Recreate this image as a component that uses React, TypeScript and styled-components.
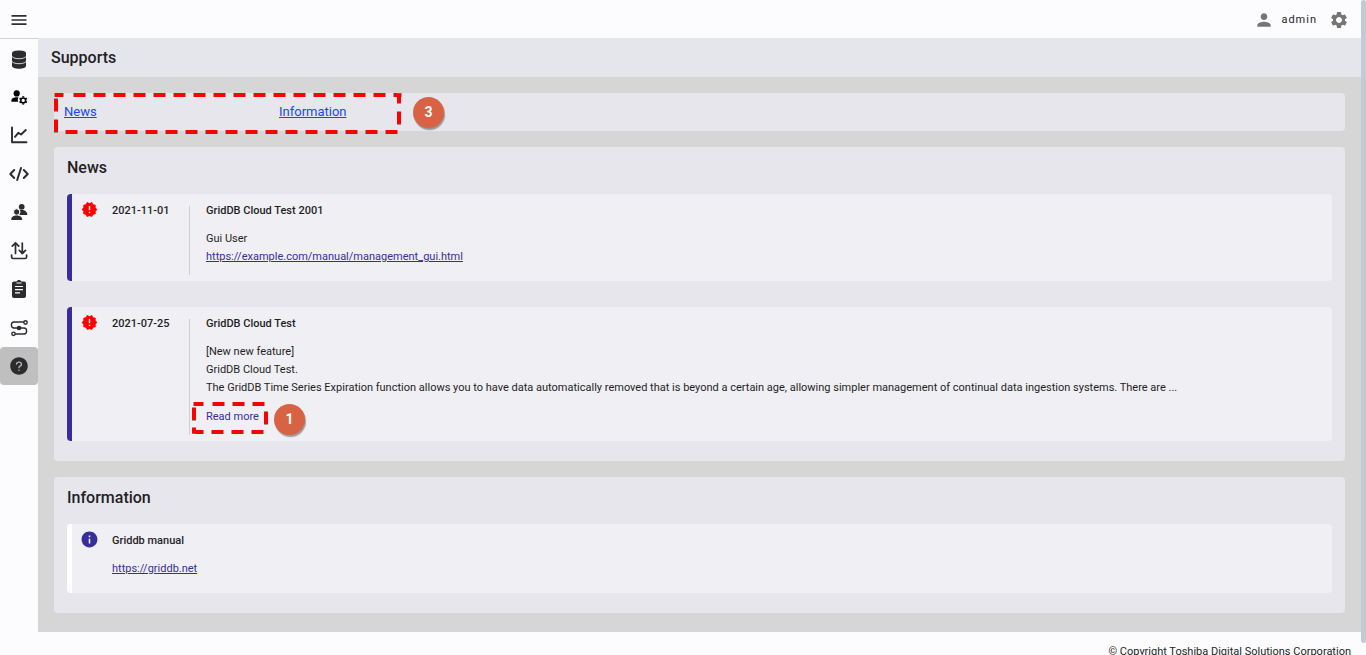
import React from "react";
import styled, { createGlobalStyle, css } from "styled-components";
import { MdInfo, MdMenu, MdNewReleases, MdPerson, MdSettings } from "react-icons/md";
import { AiFillQuestionCircle } from "react-icons/ai";

const GlobalStyle = createGlobalStyle`
  *, *::before, *::after { box-sizing: border-box; }
  body {
    margin: 0;
    background: #fcfcfe;
    color: #1f1f24;
    font-family: Roboto, "Liberation Sans", sans-serif;
    font-size: 11px;
    line-height: 18px;
  }
  h1, h2, h3, p { margin: 0; }
  button { border: 0; padding: 0; background: none; color: inherit; font: inherit; cursor: pointer; }
`;

const Window = styled.div`
  display: flex;
  height: 100vh;
`;

const Page = styled.div`
  flex: 1;
  min-width: 0;
  overflow-y: auto;
  scrollbar-width: none;
`;

const ScrollTrack = styled.div`
  flex: none;
  width: 5px;
  padding-bottom: 12px;
  background: #fcfcfe;
`;

const ScrollThumb = styled.div`
  height: 100%;
  border-radius: 3px;
  background: #c5c8d5;
`;

const TopBar = styled.header`
  display: flex;
  align-items: center;
  justify-content: space-between;
  height: 38px;
  padding: 2px 12px 0 0;
  background: #fcfcfe;
`;

const IconButton = styled.button`
  display: flex;
  align-items: center;
  justify-content: center;
  width: 38px;
  height: 36px;
  color: #303034;
`;

const Account = styled.div`
  display: flex;
  align-items: center;
  color: #757575;
`;

const UserName = styled.span`
  margin: 0 12px 0 7px;
  color: #1f1f24;
  font-size: 11px;
  letter-spacing: 1px;
`;

const SettingsButton = styled.button`
  display: flex;
  color: #757575;
`;

const Columns = styled.div`
  display: flex;
`;

const Sidebar = styled.nav`
  flex: none;
  width: 38px;
  border-top: 1px solid #d2d2d4;
`;

const SideList = styled.div`
  display: flex;
  flex-direction: column;
  justify-content: space-between;
  height: 346px;
`;

const SideButton = styled.button<{ $active?: boolean }>`
  display: flex;
  align-items: center;
  justify-content: center;
  width: 38px;
  height: 38px;
  border-radius: 4px;
  color: #2c2c2e;
  ${(p) => p.$active && css`background: #bfbfbf;`}
`;

const Content = styled.div`
  flex: 1;
  min-width: 0;
`;

const TitleBar = styled.div`
  display: flex;
  align-items: center;
  height: 39px;
  padding-left: 13px;
  background: #e5e6eb;
`;

const Title = styled.h1`
  font-size: 16px;
  font-weight: 500;
  line-height: 18px;
`;

const Main = styled.main`
  display: flex;
  flex-direction: column;
  gap: 16px;
  padding: 16px 16px 19px;
  background: #d6d6d6;
`;

const Card = styled.section`
  padding: 12px 13px 20px;
  border-radius: 4px;
  background: #e7e6ec;
`;

const JumpBar = styled.nav`
  position: relative;
  display: grid;
  grid-template-columns: 215px 1fr;
  align-items: center;
  height: 38px;
  padding: 0 10px;
  border-radius: 4px;
  background: #e7e6ec;
`;

const JumpLink = styled.a`
  justify-self: start;
  color: #1446ff;
  font-size: 13px;
`;

const CardTitle = styled.h2`
  margin-bottom: 17px;
  font-size: 16px;
  font-weight: 500;
  line-height: 18px;
`;

const Items = styled.div`
  display: flex;
  flex-direction: column;
  gap: 26px;
`;

const Item = styled.article<{ $accent: string }>`
  display: flex;
  padding-left: 9px;
  border-left: 5px solid ${(p) => p.$accent};
  border-radius: 4px;
  background: #f0eff4;
`;

const ItemIcon = styled.span<{ $color: string }>`
  display: flex;
  flex: none;
  align-items: center;
  justify-content: center;
  width: 17px;
  height: 17px;
  margin: 7px 14px 0 0;
  color: ${(p) => p.$color};
  svg { flex: none; }
`;

const ItemDate = styled.time`
  flex: none;
  width: 77px;
  padding-top: 9px;
  font-weight: 500;
  line-height: 16px;
`;

const Divider = styled.div`
  flex: none;
  width: 1px;
  margin: 12px 16px 6px 0;
  background: #cfcfd3;
`;

const ItemBody = styled.div`
  min-width: 0;
  padding: 9px 0 15px;
`;

const ItemTitle = styled.h3`
  margin-bottom: 11px;
  font-size: 11px;
  font-weight: 500;
  line-height: 16px;
`;

const TextLink = styled.a`
  color: #382d9c;
`;

const ReadMore = styled.div`
  position: relative;
  margin-top: 11px;
`;

const ReadMoreButton = styled.button`
  display: block;
  color: #382d9c;
`;

const Frame = styled.svg<{ $left: number; $top: number }>`
  position: absolute;
  left: ${(p) => p.$left}px;
  top: ${(p) => p.$top}px;
  pointer-events: none;
`;

const Marker = styled.span<{ $left: number; $top: number }>`
  position: absolute;
  left: ${(p) => p.$left}px;
  top: ${(p) => p.$top}px;
  width: 31px;
  height: 31px;
  border-radius: 50%;
  background: #d86344;
  box-shadow: 1px 2px 1px rgba(0, 0, 0, 0.35);
  color: #fff;
  font-size: 14px;
  font-weight: 700;
  line-height: 30px;
  text-align: center;
`;

const Footer = styled.footer`
  display: flex;
  justify-content: flex-end;
  height: 35px;
  padding: 11px 10px 0;
`;

type Dash = [x: number, y: number, w: number, h: number];

function DashedFrame({ left, top, width, height, dashes }: {
  left: number; top: number; width: number; height: number; dashes: Dash[];
}) {
  return (
    <Frame $left={left} $top={top} width={width} height={height} aria-hidden="true">
      {dashes.map(([x, y, w, h], i) => {
        const flat = w > h;
        return (
          <g key={i}>
            <rect x={flat ? x - 1 : x} y={flat ? y : y - 1} width={flat ? w + 2 : w} height={flat ? h : h + 2} fill="#8a7070" fillOpacity="0.7" />
            <rect x={x} y={y} width={w} height={h} fill="#ff0000" />
          </g>
        );
      })}
    </Frame>
  );
}

const row = (start: number, count: number, y: number): Dash[] =>
  Array.from({ length: count }, (_, i) => [start + i * 20, y, 11, 4] as Dash);

const jumpDashes: Dash[] = [
  [1, 0, 8, 4], ...row(20, 16, 0), [340, 0, 7, 4],
  ...row(12, 17, 37),
  [0, 6, 4, 12], [0, 27, 4, 12],
  [343, 1, 4, 9], [343, 19, 4, 12],
];

const readDashes: Dash[] = [
  [2, 0, 9, 4], ...row(21, 3, 0),
  [1, 28, 10, 4], ...row(20, 3, 28),
  [0, 6, 4, 12], [0, 26, 4, 5],
  [72, 10, 4, 12],
];

function Glyph({ children }: { children: React.ReactNode }) {
  return (
    <svg width="20" height="20" viewBox="0 0 20 20" overflow="visible" fill="none" stroke="currentColor" strokeWidth="1.7" strokeLinecap="round" strokeLinejoin="round" aria-hidden="true">
      {children}
    </svg>
  );
}

const solid = { fill: "currentColor", stroke: "none" };

const DatabaseIcon = () => (
  <Glyph>
    <path {...solid} d="M3 5.200C3 3.300 6 2.500 10 2.500s7 .8 7 2.700v12.600c0 1.900-3 3-7 3s-7-1.100-7-3z" />
    <path stroke="#fcfcfe" strokeWidth="0.8" strokeLinecap="butt" d="M3 8.500c1 1.500 4 2.200 7 2.200s6-.7 7-2.200M3 13.500c1 1.500 4 2.200 7 2.200s6-.7 7-2.200" />
  </Glyph>
);

const teeth = [0, 60, 120, 180, 240, 300];

const UserGearIcon = () => (
  <Glyph>
    <g color="#000">
      <circle {...solid} cx="7.700" cy="6.400" r="3.100" />
      <path {...solid} d="M2.400 14.700v-1.300c0-2.100 2.600-3.200 5.500-3.200.6 0 1.100 0 1.600.1-.8 1.400-.9 3-.3 4.400z" />
      <circle cx="14.200" cy="13.400" r="2.400" stroke="#000" strokeWidth="1.500" />
      {teeth.map((a) => (
        <path key={a} d="M14.200 10.500v-1.300" stroke="#000" strokeWidth="1.900" strokeLinecap="butt" transform={`rotate(${a} 14.200 13.400)`} />
      ))}
    </g>
  </Glyph>
);

const ChartIcon = () => (
  <Glyph>
    <path strokeWidth="1.900" d="M3 2.500v14.700h14.500M6 11.800l3.300-4 2.700 1.700 4.800-4.500" />
  </Glyph>
);

const CodeIcon = () => (
  <Glyph>
    <path strokeWidth="2" d="M5.200 6L1.300 10l3.900 4M14.800 6l3.900 4-3.900 4M12 4L8.200 16" />
  </Glyph>
);

const PeopleIcon = () => (
  <Glyph>
    <circle {...solid} cx="12.700" cy="4.800" r="2.900" />
    <path {...solid} d="M9 9.300c1-.9 2.300-1.300 3.800-1.300 3.200 0 5.500 1.800 5.500 4.500v.5h-7.500z" />
    <circle fill="currentColor" stroke="#fcfcfe" strokeWidth="1" cx="7.700" cy="10" r="3.200" />
    <path {...solid} d="M2.300 18v-.7c0-2.400 2.400-3.900 5.400-3.900s5.400 1.500 5.400 3.900v.7z" />
  </Glyph>
);

const TransferIcon = () => (
  <Glyph>
    <path d="M6.500 12.500V2M3.300 5.200L6.500 1.900l3.200 3.300M13.300 2v10.500M10.300 9.300l3 3.300 3.200-3.300M2.600 14v2c0 1 .5 1.500 1.500 1.500h12c1 0 1.500-.5 1.500-1.500v-2" />
  </Glyph>
);

const ClipboardIcon = () => (
  <Glyph>
    <path {...solid} d="M5 2.500h2.600C8 1.500 8.800 1 10 1s2 .5 2.400 1.500H15c1.200 0 2 .8 2 2v12.500c0 1.200-.8 2-2 2H5c-1.200 0-2-.8-2-2V4.500c0-1.200.8-2 2-2z" />
    <path stroke="#fcfcfe" strokeWidth="1.200" strokeLinecap="butt" d="M6 7.500h8M6 10.700h8M6 13.900h5M7.500 4h5" />
  </Glyph>
);

const RouteIcon = () => (
  <Glyph>
    <g strokeWidth="1.400">
      <path d="M14.700 4H5C3.300 4 2.400 5 2.400 6.800S3.300 10 5 10h10c1.700 0 2.600 1.200 2.600 3s-.9 3-2.600 3H6.500" />
      <circle cx="16.500" cy="4.500" r="1.700" fill="#fcfcfe" />
      <circle cx="4.500" cy="15.800" r="1.700" fill="#fcfcfe" />
      <circle {...solid} cx="10" cy="10" r="2.300" />
    </g>
  </Glyph>
);

const sideItems: { label: string; icon: React.ReactNode; active?: boolean }[] = [
  { label: "Clusters", icon: <DatabaseIcon /> },
  { label: "Database users", icon: <UserGearIcon /> },
  { label: "Monitoring", icon: <ChartIcon /> },
  { label: "Query", icon: <CodeIcon /> },
  { label: "Users", icon: <PeopleIcon /> },
  { label: "Import and export", icon: <TransferIcon /> },
  { label: "Logs", icon: <ClipboardIcon /> },
  { label: "Network", icon: <RouteIcon /> },
  { label: "Supports", icon: <AiFillQuestionCircle size={20} />, active: true },
];

export default function App() {
  return (
    <>
      <GlobalStyle />
      <Window>
        <Page>
          <TopBar>
            <IconButton aria-label="Menu"><MdMenu size={20} /></IconButton>
            <Account>
              <MdPerson size={20} />
              <UserName>admin</UserName>
              <SettingsButton aria-label="Settings"><MdSettings size={20} /></SettingsButton>
            </Account>
          </TopBar>
          <Columns>
            <Sidebar>
              <SideList>
                {sideItems.map((s) => (
                  <SideButton key={s.label} aria-label={s.label} $active={s.active}>{s.icon}</SideButton>
                ))}
              </SideList>
            </Sidebar>
            <Content>
              <TitleBar><Title>Supports</Title></TitleBar>
              <Main>
                <JumpBar>
                  <JumpLink href="#news">News</JumpLink>
                  <JumpLink href="#information">Information</JumpLink>
                  <DashedFrame left={0} top={0} width={348} height={42} dashes={jumpDashes} />
                  <Marker $left={359} $top={4}>3</Marker>
                </JumpBar>
                <Card id="news">
                  <CardTitle>News</CardTitle>
                  <Items>
                    <Item $accent="#372e9c">
                      <ItemIcon $color="#ff0000"><MdNewReleases size={17} /></ItemIcon>
                      <ItemDate>2021-11-01</ItemDate>
                      <Divider />
                      <ItemBody>
                        <ItemTitle>GridDB Cloud Test 2001</ItemTitle>
                        <p>Gui User</p>
                        <p><TextLink href="#gui">https://example.com/manual/management_gui.html</TextLink></p>
                      </ItemBody>
                    </Item>
                    <Item $accent="#372e9c">
                      <ItemIcon $color="#ff0000"><MdNewReleases size={17} /></ItemIcon>
                      <ItemDate>2021-07-25</ItemDate>
                      <Divider />
                      <ItemBody>
                        <ItemTitle>GridDB Cloud Test</ItemTitle>
                        <p>[New new feature]</p>
                        <p>GridDB Cloud Test.</p>
                        <p>The GridDB Time Series Expiration function allows you to have data automatically removed that is beyond a certain age, allowing simpler management of continual data ingestion systems. There are ...</p>
                        <ReadMore>
                          <ReadMoreButton>Read more</ReadMoreButton>
                          <DashedFrame left={-14} top={-6} width={77} height={33} dashes={readDashes} />
                          <Marker $left={68} $top={-4}>1</Marker>
                        </ReadMore>
                      </ItemBody>
                    </Item>
                  </Items>
                </Card>
                <Card id="information">
                  <CardTitle>Information</CardTitle>
                  <Items>
                    <Item $accent="#ffffff">
                      <ItemIcon $color="#372e9c"><MdInfo size={19} /></ItemIcon>
                      <ItemBody>
                        <ItemTitle>Griddb manual</ItemTitle>
                        <p><TextLink href="#griddb">https://griddb.net</TextLink></p>
                      </ItemBody>
                    </Item>
                  </Items>
                </Card>
              </Main>
              <Footer>© Copyright Toshiba Digital Solutions Corporation</Footer>
            </Content>
          </Columns>
        </Page>
        <ScrollTrack><ScrollThumb /></ScrollTrack>
      </Window>
    </>
  );
}
